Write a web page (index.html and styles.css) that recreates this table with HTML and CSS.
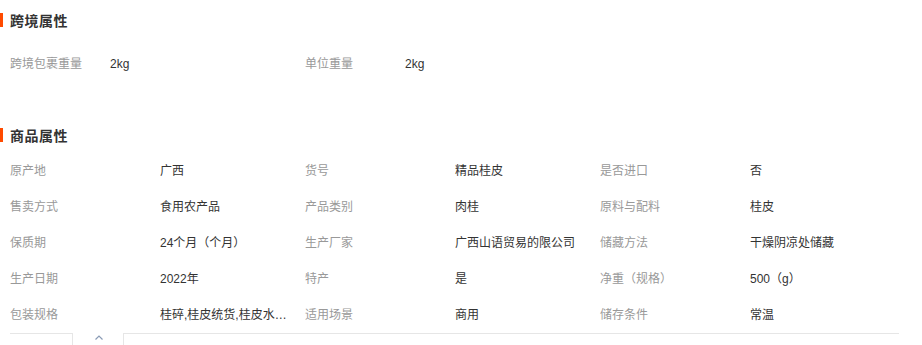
FILE: index.html
```html
<!DOCTYPE html>
<html lang="zh-CN">
<head>
<meta charset="utf-8">
<title>属性</title>
<link rel="stylesheet" href="styles.css">
</head>
<body>
<div class="page">
  <section class="sec sec-cross">
    <h3 class="title"><span class="bar"></span><span class="title-text">跨境属性</span></h3>
    <div class="grid grid-cross">
      <div class="item"><span class="label">跨境包裹重量</span><span class="value">2kg</span></div>
      <div class="item"><span class="label">单位重量</span><span class="value">2kg</span></div>
    </div>
  </section>
  <section class="sec sec-goods">
    <h3 class="title"><span class="bar"></span><span class="title-text">商品属性</span></h3>
    <div class="grid grid-goods">
      <div class="item"><span class="label">原产地</span><span class="value">广西</span></div>
      <div class="item"><span class="label">货号</span><span class="value">精品桂皮</span></div>
      <div class="item"><span class="label">是否进口</span><span class="value">否</span></div>
      <div class="item"><span class="label">售卖方式</span><span class="value">食用农产品</span></div>
      <div class="item"><span class="label">产品类别</span><span class="value">肉桂</span></div>
      <div class="item"><span class="label">原料与配料</span><span class="value">桂皮</span></div>
      <div class="item"><span class="label">保质期</span><span class="value">24个月（个月）</span></div>
      <div class="item"><span class="label">生产厂家</span><span class="value">广西山语贸易的限公司</span></div>
      <div class="item"><span class="label">储藏方法</span><span class="value">干燥阴凉处储藏</span></div>
      <div class="item"><span class="label">生产日期</span><span class="value">2022年</span></div>
      <div class="item"><span class="label">特产</span><span class="value">是</span></div>
      <div class="item"><span class="label">净重（规格）</span><span class="value">500（g）</span></div>
      <div class="item"><span class="label">包装规格</span><span class="value" title="桂碎,桂皮统货,桂皮水洗,桂皮精品">桂碎,桂皮统货,桂皮水…</span></div>
      <div class="item"><span class="label">适用场景</span><span class="value">商用</span></div>
      <div class="item"><span class="label">储存条件</span><span class="value">常温</span></div>
    </div>
    <div class="fold">
      <div class="fold-left"></div>
      <div class="fold-toggle">
        <svg class="caret" width="8" height="5" viewBox="0 0 8 5"><polyline points="0.5,4.5 4,1 7.5,4.5" fill="none" stroke="#8a9bb5" stroke-width="1.2"/></svg>
      </div>
      <div class="fold-right"></div>
    </div>
  </section>
</div>
</body>
</html>
```

FILE: styles.css
```css
html, body {
  margin: 0;
  padding: 0;
  background: #fff;
}
body {
  font-family: "Liberation Sans", "Noto Sans CJK SC", sans-serif;
  font-size: 12px;
  color: #333;
}
.page {
  width: 922px;
  height: 345px;
  overflow: hidden;
}
.title {
  display: flex;
  align-items: center;
  margin: 0;
  height: 14px;
  font-size: 14px;
  line-height: 14px;
  font-weight: bold;
  color: #333;
  font-family: "Noto Sans CJK SC", sans-serif;
}
.bar {
  width: 3px;
  height: 14px;
  background: #ff4a00;
  margin-right: 7px;
}
.title-text {
  letter-spacing: 0.5px;
}
.sec-cross {
  padding-top: 13px;
}
.sec-cross .grid {
  margin-top: 19px;
}
.sec-goods {
  margin-top: 46px;
}
.sec-goods .grid {
  margin-top: 11px;
}
.grid {
  display: grid;
  grid-template-columns: repeat(3, 295px);
  padding-left: 10px;
}
.item {
  display: flex;
  height: 36px;
  line-height: 36px;
  white-space: nowrap;
}
.label {
  color: #999;
  flex: 0 0 150px;
}
.grid-cross .label {
  flex-basis: 100px;
}
.value {
  color: #333;
}
.fold {
  display: flex;
  height: 12px;
  padding-left: 10px;
}
.fold-left {
  width: 62px;
  border-top: 1px solid #e6e6e6;
  border-right: 1px solid #e6e6e6;
}
.fold-toggle {
  width: 50px;
  display: flex;
  justify-content: center;
  align-items: flex-start;
  padding-top: 2px;
}
.caret {
  display: block;
  margin-left: 1px;
}
.fold-right {
  width: 775px;
  border-top: 1px solid #e6e6e6;
  border-left: 1px solid #e6e6e6;
}
```
